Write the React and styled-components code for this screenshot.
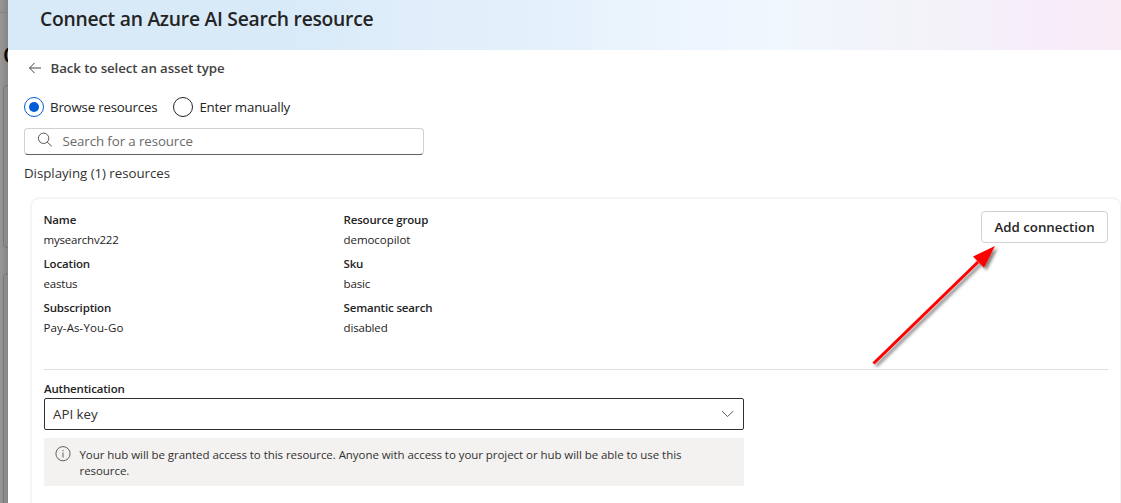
import React from 'react';
import styled, { createGlobalStyle } from 'styled-components';

const GlobalStyle = createGlobalStyle`
  * { box-sizing: border-box; }
  body {
    margin: 0;
    overflow: hidden;
    background: #fff;
    color: #242424;
    font-family: 'Open Sans', 'Noto Sans', sans-serif;
  }
`;

const Page = styled.div`
  position: relative;
  display: flex;
  width: 1121px;
  height: 503px;
  overflow: hidden;
`;

const Backdrop = styled.aside`
  width: 8px;
  flex: none;
  display: flex;
  flex-direction: column;
  overflow: hidden;
  background: linear-gradient(90deg, #969696 0, #919191 3px, #858585 8px);
`;

const BackdropBar = styled.div`
  height: 13px;
  flex: none;
  border-bottom: 1px solid #828282;
`;

const BackdropTitle = styled.div`
  height: 72px;
  flex: none;
  padding: 28px 0 0 3px;
  font-size: 21px;
  line-height: 28px;
  font-weight: 600;
  color: #0a0505;
`;

const BackdropCard = styled.div`
  width: 40px;
  height: ${(p) => p.$height}px;
  flex: none;
  margin: 0 0 25px 3px;
  border: 1px solid #757575;
  border-radius: 4px;
`;

const Panel = styled.main`
  flex: 1;
  min-width: 0;
  display: flex;
  flex-direction: column;
`;

const Header = styled.header`
  height: 50px;
  flex: none;
  padding: 5px 32px 0;
  background: linear-gradient(
    90deg,
    #d8eaf8 0,
    #d9eaf8 300px,
    #dfeefa 400px,
    #e2f0fa 500px,
    #e8f3fc 600px,
    #eff5fe 710px,
    #f1f7fe 770px,
    #f1f4fa 860px,
    #f3f2f8 930px,
    #f5effa 990px,
    #f7ebf9 1060px,
    #f8ebf5 1113px
  );
`;

const Title = styled.h1`
  margin: 0;
  font-size: 19.3px;
  line-height: 28px;
  font-weight: 600;
  letter-spacing: -0.26px;
  white-space: nowrap;
`;

const Body = styled.div`
  padding: 8px 0 0 16px;
`;

const BackLink = styled.a`
  display: flex;
  align-items: center;
  gap: 7.5px;
  height: 20px;
  padding-left: 4px;
  color: #424242;
  font-size: 13.3px;
  font-weight: 600;
  letter-spacing: -0.1px;
  white-space: nowrap;
`;

const RadioGroup = styled.div`
  display: flex;
  gap: 16px;
  height: 22px;
  margin-top: 18px;
`;

const RadioOption = styled.label`
  display: flex;
  align-items: center;
  gap: 6px;
  height: 22px;
  font-size: 13.3px;
  letter-spacing: -0.2px;
  white-space: nowrap;
`;

const RadioMark = styled.span`
  display: grid;
  place-items: center;
  width: 20px;
  height: 20px;
  border: 1px solid ${(p) => (p.$checked ? '#015cda' : '#242424')};
  border-radius: 50%;
  &::after {
    content: '';
    width: 10px;
    height: 10px;
    border-radius: 50%;
    background: ${(p) => (p.$checked ? '#015cda' : 'transparent')};
  }
`;

const SearchBox = styled.div`
  display: flex;
  align-items: center;
  gap: 9.5px;
  width: 400px;
  height: 27px;
  margin-top: 10px;
  padding: 0 13px 2px 12px;
  border: 1px solid #d1d1d1;
  border-bottom-color: #616161;
  border-radius: 4px;
  color: #6a6a6a;
  font-size: 13.3px;
  letter-spacing: -0.1px;
  svg { margin-top: -1px; }
`;

const Count = styled.p`
  margin: 8px 0 0;
  font-size: 13.3px;
  line-height: 20px;
  letter-spacing: -0.04px;
  color: #333;
`;

const Card = styled.section`
  width: 1090px;
  height: 330px;
  margin: 15px 0 0 7px;
  padding: 12px 12px 0;
  border: 1px solid #f2f2f2;
  border-radius: 8px;
  box-shadow: 0 0 2px rgba(0, 0, 0, 0.1);
`;

const Summary = styled.div`
  display: flex;
  justify-content: space-between;
  align-items: flex-start;
  height: 159px;
  border-bottom: 1px solid #e0e0e0;
`;

const Fields = styled.dl`
  display: grid;
  grid-template-columns: 300px 300px;
  grid-auto-rows: 44px;
  margin: 1px 0 0 -0.5px;
`;

const Label = styled.dt`
  font-size: 11.5px;
  line-height: 16px;
  font-weight: 600;
  letter-spacing: -0.16px;
`;

const Value = styled.dd`
  margin: 4px 0 0;
  font-size: 11.5px;
  line-height: 16px;
  letter-spacing: ${(p) => p.$tracking}px;
`;

const ConnectButton = styled.button`
  width: 127px;
  height: 32px;
  padding: 0;
  border: 1px solid #d1d1d1;
  border-radius: 4px;
  background: #fff;
  color: #242424;
  font-family: inherit;
  font-size: 13.3px;
  font-weight: 600;
  white-space: nowrap;
`;

const Authentication = styled.div`
  width: 700px;
  padding-top: 11px;
`;

const Select = styled.div`
  display: flex;
  align-items: center;
  justify-content: space-between;
  height: 32px;
  margin-top: 1px;
  padding: 0 8px;
  border: 1px solid #323130;
  border-radius: 2px;
  color: #323130;
  font-size: 13.3px;
`;

const Notice = styled.div`
  display: flex;
  gap: 7.5px;
  height: 48px;
  margin-top: 8px;
  padding: 8px 0 0 11px;
  background: #f3f2f1;
  color: #323130;
  font-size: 11.5px;
  line-height: 16px;
  letter-spacing: -0.055px;
  svg { flex: none; }
  p { margin: 1px 0 0; width: 620px; }
`;

const Annotation = styled.svg`
  position: absolute;
  left: 859px;
  top: 235px;
`;

const BackIcon = () => (
  <svg width="15" height="14" viewBox="0 0 15 14" fill="none" stroke="#424242">
    <path d="M6.5 2 1.5 7l5 5M1.5 7H13" />
  </svg>
);

const SearchIcon = () => (
  <svg width="16" height="16" viewBox="0 0 16 16" fill="none" stroke="#555">
    <circle cx="6.6" cy="6.3" r="5.2" />
    <path d="m10.3 10 4.4 4.4" />
  </svg>
);

const ChevronIcon = () => (
  <svg width="14" height="14" viewBox="0 0 14 14" fill="none" stroke="#605e5c">
    <path d="m1 4 5.6 5.6L12.200 4" />
  </svg>
);

const InfoIcon = () => (
  <svg width="17" height="16" viewBox="0 0 17 16" fill="none" stroke="#605e5c">
    <circle cx="8" cy="7.7" r="7.1" />
    <path d="M8 6.5v5M8 4v1.2" />
  </svg>
);

const fields = [
  ['Name', 'mysearchv222', -0.2],
  ['Resource group', 'democopilot', -0.05],
  ['Location', 'eastus', -0.2],
  ['Sku', 'basic', -0.15],
  ['Subscription', 'Pay-As-You-Go', 0.1],
  ['Semantic search', 'disabled', -0.15],
];

export default function App() {
  return (
    <Page>
      <GlobalStyle />
      <Backdrop>
        <BackdropBar />
        <BackdropTitle>C</BackdropTitle>
        <BackdropCard $height={163} />
        <BackdropCard $height={260} />
      </Backdrop>
      <Panel>
        <Header>
          <Title>Connect an Azure AI Search resource</Title>
        </Header>
        <Body>
          <BackLink>
            <BackIcon />
            Back to select an asset type
          </BackLink>
          <RadioGroup>
            <RadioOption>
              <RadioMark $checked />
              Browse resources
            </RadioOption>
            <RadioOption>
              <RadioMark />
              Enter manually
            </RadioOption>
          </RadioGroup>
          <SearchBox>
            <SearchIcon />
            Search for a resource
          </SearchBox>
          <Count>Displaying (1) resources</Count>
          <Card>
            <Summary>
              <Fields>
                {fields.map(([label, value, tracking]) => (
                  <div key={label}>
                    <Label>{label}</Label>
                    <Value $tracking={tracking}>{value}</Value>
                  </div>
                ))}
              </Fields>
              <ConnectButton>Add connection</ConnectButton>
            </Summary>
            <Authentication>
              <Label as="div">Authentication</Label>
              <Select>
                API key
                <ChevronIcon />
              </Select>
              <Notice>
                <InfoIcon />
                <p>
                  Your hub will be granted access to this resource. Anyone with access to your
                  project or hub will be able to use this resource.
                </p>
              </Notice>
            </Authentication>
          </Card>
        </Body>
      </Panel>
      <Annotation width="150" height="145" viewBox="0 0 150 145">
        <defs>
          <filter id="shadow" x="-10%" y="-10%" width="125%" height="125%">
            <feDropShadow dx="2.5" dy="2.5" stdDeviation="1.5" floodColor="#000" floodOpacity="0.5" />
          </filter>
        </defs>
        <g filter="url(#shadow)">
          <path d="M14.5 128.500 119 27" stroke="#f00" strokeWidth="3" fill="none" />
          <path d="M136 11 114 21.500 125 32.800Z" fill="#f00" />
        </g>
      </Annotation>
    </Page>
  );
}
